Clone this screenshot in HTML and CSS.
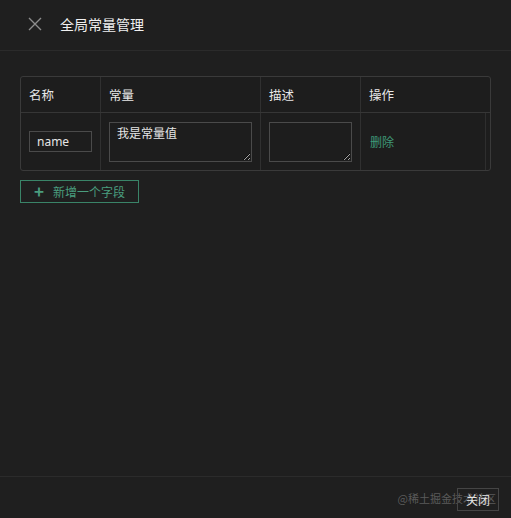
FILE: index.html
```html
<!DOCTYPE html>
<html>
<head>
    <title>全局常量管理</title>
    <link rel="stylesheet" href="styles.css">
</head>
<body>
    <div class="drawer">
        <div class="drawer-header">
            <span class="close-icon">
                <svg width="14" height="14" viewBox="0 0 14 14"><path d="M1 1 L13 13 M13 1 L1 13" stroke="#8c8c8c" stroke-width="1.4" fill="none"/></svg>
            </span>
            <span class="drawer-title">全局常量管理</span>
        </div>
        <div class="drawer-body">
            <div class="table">
                <div class="row head">
                    <div class="cell c1">名称</div>
                    <div class="cell c2">常量</div>
                    <div class="cell c3">描述</div>
                    <div class="cell c4">操作</div>
                </div>
                <div class="row body-row">
                    <div class="cell c1"><input class="field" value="name"></div>
                    <div class="cell c2"><textarea class="area">我是常量值</textarea></div>
                    <div class="cell c3"><textarea class="area"></textarea></div>
                    <div class="cell c4"><a class="link">删除</a><span class="fixed-edge"></span></div>
                </div>
            </div>
            <button class="add-btn"><span class="plus">+</span>新增一个字段</button>
        </div>
        <div class="drawer-footer">
            <span class="watermark">@稀土掘金技术社区</span>
            <button class="close-btn">关闭</button>
        </div>
    </div>
</body>
</html>
```

FILE: styles.css
```css
* {
    margin: 0;
    padding: 0;
    box-sizing: border-box;
}

body {
    background: #1f1f1f;
    font-family: "Noto Sans CJK SC", "Noto Sans", sans-serif;
    color: #e6e6e6;
    width: 511px;
    height: 518px;
    overflow: hidden;
}

.drawer {
    display: flex;
    flex-direction: column;
    height: 518px;
}

.drawer-header {
    height: 51px;
    display: flex;
    align-items: center;
    padding: 0 0 3px 28px;
    border-bottom: 1px solid #2b2b2b;
}

.close-icon {
    display: flex;
    width: 14px;
    height: 14px;
    margin-right: 18px;
}

.drawer-title {
    font-size: 14px;
    color: #f0f0f0;
}

.drawer-body {
    flex: 1;
    padding: 25px 20px 0 20px;
}

.table {
    width: 471px;
    border: 1px solid #3a3a3a;
    border-radius: 3px;
    background: #1d1d1d;
}

.row {
    display: flex;
}

.head {
    height: 36px;
    border-bottom: 1px solid #363636;
}

.head .cell {
    display: flex;
    align-items: center;
    font-size: 12.5px;
    color: #e8e8e8;
}

.body-row {
    height: 57px;
}

.cell {
    padding: 0 8px;
    border-right: 1px solid #303030;
}

.c1 { width: 80px; }
.c2 { width: 160px; }
.c3 { width: 100px; }
.c4 { width: 129px; border-right: none; position: relative; }

.body-row .cell {
    display: flex;
    align-items: center;
}

.field {
    width: 63px;
    height: 21px;
    background: #1d1d1d;
    border: 1px solid #4a4a4a;
    color: #e6e6e6;
    font-family: "Noto Sans", sans-serif;
    font-size: 12px;
    padding: 0 7px;
    outline: none;
}

.area {
    width: 100%;
    height: 40px;
    background: #1d1d1d;
    border: 1px solid #4a4a4a;
    color: #e6e6e6;
    font-family: "Noto Sans CJK SC", sans-serif;
    font-size: 12px;
    padding: 1px 7px;
    outline: none;
    resize: vertical;
}

.link {
    color: #3f9a78;
    font-size: 12px;
    padding-left: 1px;
}

.fixed-edge {
    position: absolute;
    right: 4px;
    top: 0;
    bottom: 0;
    width: 1px;
    background: #2e2e2e;
}

.add-btn {
    margin-top: 9px;
    width: 119px;
    height: 23px;
    display: flex;
    align-items: center;
    padding-left: 13px;
    background: transparent;
    border: 1px solid #3a8468;
    color: #4a9d7e;
    font-family: "Noto Sans CJK SC", sans-serif;
    font-size: 12px;
}

.plus {
    font-size: 17px;
    font-weight: 700;
    margin-right: 9px;
    line-height: 1;
    margin-top: -2px;
}

.drawer-footer {
    position: relative;
    height: 42px;
    border-top: 1px solid #2b2b2b;
    display: flex;
    justify-content: flex-end;
    align-items: center;
    padding-right: 12px;
}

.close-btn {
    position: relative;
    width: 42px;
    height: 23px;
    margin-top: 4px;
    background: transparent;
    border: 1px solid #454545;
    color: #e6e6e6;
    font-family: "Noto Sans CJK SC", sans-serif;
    font-size: 12px;
}

/* site watermark stamped over the footer */
.watermark {
    position: absolute;
    right: 15px;
    top: 13px;
    font-size: 11px;
    color: rgba(150, 150, 150, 0.5);
}
```
